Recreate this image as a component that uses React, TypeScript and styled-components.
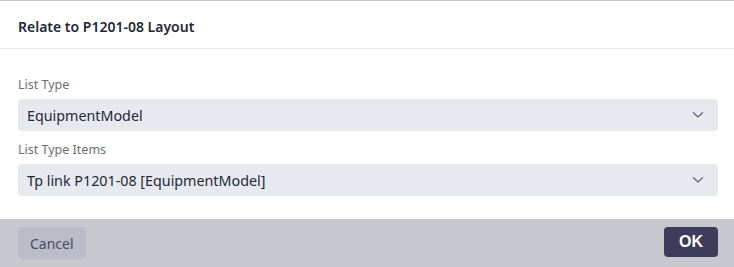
import React from 'react';
import styled, { createGlobalStyle } from 'styled-components';

const GlobalStyle = createGlobalStyle`
  html, body {
    margin: 0;
    padding: 0;
    background: #ffffff;
  }
  body {
    font-family: 'Noto Sans', 'Open Sans', sans-serif;
    -webkit-font-smoothing: antialiased;
  }
`;

const Dialog = styled.div`
  width: 734px;
  height: 267px;
  display: flex;
  flex-direction: column;
  background: #ffffff;
  border-top: 1px solid #c3c7cf;
  box-sizing: border-box;
`;

const Header = styled.div`
  height: 48px;
  flex-shrink: 0;
  display: flex;
  align-items: center;
  padding: 4px 18px 0;
  border-bottom: 1px solid #e6e6e8;
  box-sizing: border-box;
  font-size: 14px;
  font-weight: 600;
  color: #232838;
`;

const Body = styled.div`
  flex: 1;
  display: flex;
  flex-direction: column;
  padding: 28px 16px 0 18px;
`;

const Field = styled.div`
  display: flex;
  flex-direction: column;
  margin-bottom: 11px;
`;

const Label = styled.label`
  font-size: 12.5px;
  color: #6e6e76;
  line-height: 16px;
  margin-bottom: 6px;
`;

const Select = styled.div`
  height: 32px;
  display: flex;
  align-items: center;
  justify-content: space-between;
  padding: 0 14px 0 9px;
  background: #e7e9ee;
  border-radius: 4px;
  font-size: 14.3px;
  color: #232838;
`;

const Chevron = () => (
  <svg width='12' height='8' viewBox='0 0 12 8' fill='none'>
    <path d='M1.5 1.8 L6 6 L10.5 1.8' stroke='#6b7080' strokeWidth='1.5' strokeLinecap='round' strokeLinejoin='round' />
  </svg>
);

const Footer = styled.div`
  height: 48px;
  flex-shrink: 0;
  display: flex;
  align-items: center;
  justify-content: space-between;
  padding: 0 16px 0 18px;
  box-sizing: border-box;
  background: #c6c7cf;
`;

const Button = styled.button<{ $primary?: boolean }>`
  height: ${(p) => (p.$primary ? '30px' : '32px')};
  padding: 0 ${(p) => (p.$primary ? '15px' : '12px')};
  border: none;
  border-radius: 4px;
  font-family: ${(p) => (p.$primary ? "'Liberation Sans', Arial, sans-serif" : "'Noto Sans', sans-serif")};
  font-size: ${(p) => (p.$primary ? '16px' : '14px')};
  font-weight: ${(p) => (p.$primary ? 700 : 400)};
  background: ${(p) => (p.$primary ? '#3e3b5b' : '#babcc7')};
  color: ${(p) => (p.$primary ? '#ffffff' : '#4a4a63')};
  align-self: ${(p) => (p.$primary ? 'flex-start' : 'center')};
  margin-top: ${(p) => (p.$primary ? '8px' : '0')};
  cursor: pointer;
`;

export default function App (): React.ReactElement {
  return (
    <>
      <GlobalStyle />
      <Dialog>
        <Header>Relate to P1201-08 Layout</Header>
        <Body>
          <Field>
            <Label>List Type</Label>
            <Select>
              <span>EquipmentModel</span>
              <Chevron />
            </Select>
          </Field>
          <Field>
            <Label>List Type Items</Label>
            <Select>
              <span>Tp link P1201-08 [EquipmentModel]</span>
              <Chevron />
            </Select>
          </Field>
        </Body>
        <Footer>
          <Button>Cancel</Button>
          <Button $primary>OK</Button>
        </Footer>
      </Dialog>
    </>
  );
}
